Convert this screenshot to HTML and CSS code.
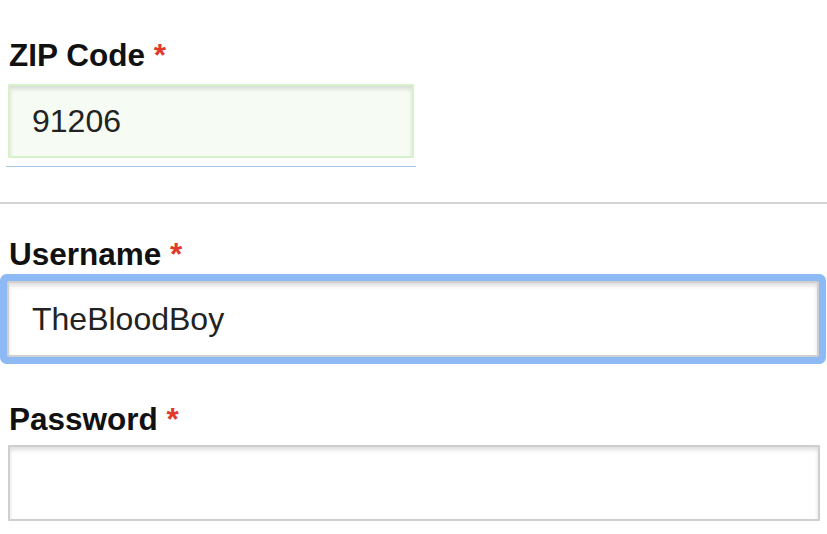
FILE: index.html
```html
<!DOCTYPE html>
<html>
<head>
<meta charset="utf-8">
<link rel="stylesheet" href="styles.css">
</head>
<body>
<form class="form">
  <div class="field field-zip">
    <label class="label">ZIP Code <span class="req">*</span></label>
    <input class="input input-valid" type="text" value="91206">
    <div class="underline"></div>
  </div>
  <div class="rule"></div>
  <div class="field field-user">
    <label class="label">Username <span class="req">*</span></label>
    <input class="input input-focus" type="text" value="TheBloodBoy">
  </div>
  <div class="field field-pass">
    <label class="label">Password <span class="req">*</span></label>
    <input class="input" type="password" value="">
  </div>
</form>
</body>
</html>
```

FILE: styles.css
```css
html, body {
  margin: 0;
  padding: 0;
  background: #ffffff;
}
body {
  font-family: "Liberation Sans", Arial, Helvetica, sans-serif;
  width: 827px;
  height: 534px;
  overflow: hidden;
}
.form {
  display: flex;
  flex-direction: column;
  padding-top: 37px;
}
.field {
  display: flex;
  flex-direction: column;
}
.label {
  display: block;
  font-size: 31.5px;
  line-height: 36px;
  font-weight: bold;
  color: #111111;
  padding-left: 9px;
}
.req {
  color: #e2392b;
}
.input {
  box-sizing: border-box;
  font-family: "Liberation Sans", Arial, Helvetica, sans-serif;
  font-size: 32px;
  color: #222222;
  background: #ffffff;
  border: 2px solid #cfcfcf;
  border-radius: 1px;
  box-shadow: inset 0 3px 4px rgba(0, 0, 0, 0.13);
  padding: 0 22px;
  margin: 0;
  outline: none;
}
.field-zip .input {
  margin-top: 11px;
  margin-left: 8px;
  width: 406px;
  height: 74px;
}
.input-valid {
  border-color: #d6f2c9;
  background: #f6fbf3;
}
.underline {
  margin-top: 8px;
  margin-left: 6px;
  width: 410px;
  height: 1px;
  background: #a9c7ed;
}
.rule {
  margin-top: 35px;
  height: 2px;
  background: #d4d4d4;
}
.field-user .label {
  margin-top: 32px;
}
.field-user .input {
  margin-top: 9px;
  margin-left: 7px;
  width: 812px;
  height: 76px;
  padding-left: 23px;
}
.input-focus {
  box-shadow: inset 0 3px 4px rgba(0, 0, 0, 0.13), 0 0 0 7px #8db9f4;
  border-radius: 2px;
}
.field-pass .label {
  margin-top: 44px;
}
.field-pass .input {
  margin-top: 8px;
  margin-left: 8px;
  width: 812px;
  height: 76px;
}
```
